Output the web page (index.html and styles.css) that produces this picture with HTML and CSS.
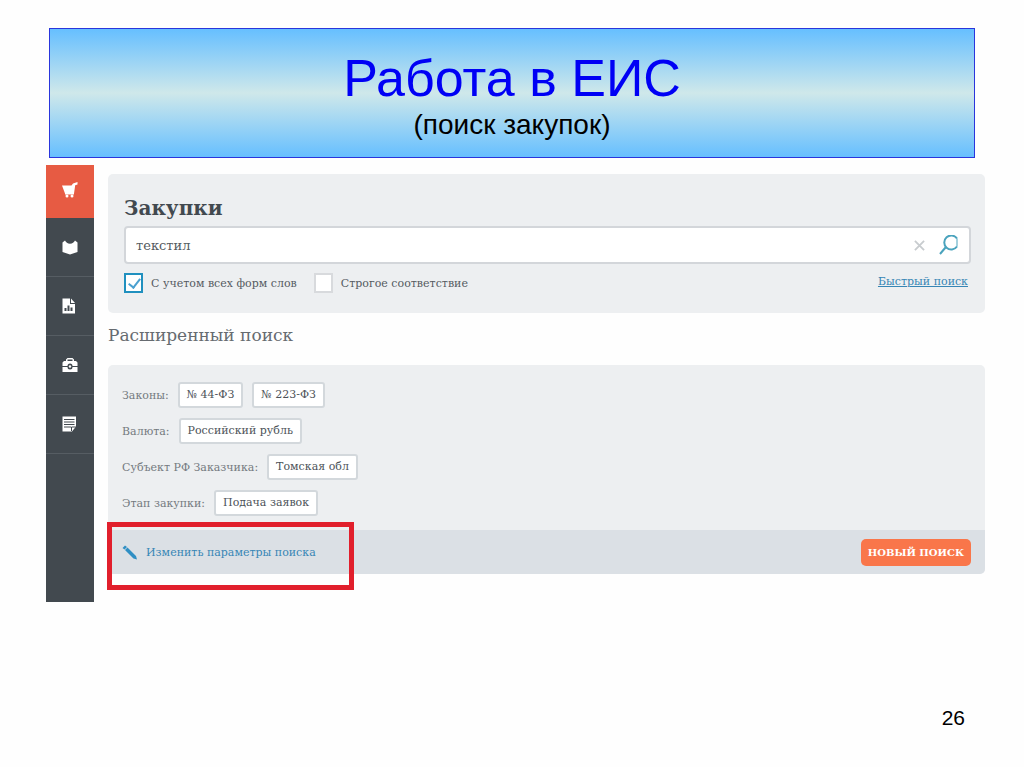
FILE: index.html
```html
<!DOCTYPE html>
<html lang="ru">
<head>
<meta charset="utf-8">
<meta name="viewport" content="width=device-width, initial-scale=1">
<title>Работа в ЕИС</title>
<link rel="stylesheet" href="styles.css">
</head>
<body>
<div class="slide">
  <header class="banner">
    <h1 class="banner-title">Работа в ЕИС</h1>
    <p class="banner-subtitle">(поиск закупок)</p>
  </header>

  <div class="app">
    <nav class="sidebar" aria-label="Разделы">
      <a class="nav-item nav-item-active" href="#purchases" aria-label="Закупки">
        <svg class="nav-icon" viewBox="0 0 16 16"><path d="M0 3.500h9.500L11 1.500 15.500 0v2.500l-2.300.8-1.200 8.200H3Z"/><path d="M3 11h9v1.500H3z"/><circle cx="5" cy="14" r="1.500"/><circle cx="10" cy="14" r="1.500"/></svg>
      </a>
      <a class="nav-item" href="#registry" aria-label="Реестры">
        <svg class="nav-icon" viewBox="0 0 16 16"><path d="M.5 3.500 3 1.500c1 2 2.500 3 5 3.300 2.500-.3 4-1.300 5-3.300l2.500 2V13L8 15.500.5 13Z"/></svg>
      </a>
      <a class="nav-item" href="#reports" aria-label="Отчеты">
        <svg class="nav-icon" viewBox="0 0 16 16"><path fill-rule="evenodd" d="M.5.5h7.500V6H13v9.500H.5Zm2 9.500V13h2v-3Zm3-2.500V13h2V7.500Zm3 2v3.500h2V9.500Z"/><path d="M9 .5 13 5H9Z"/></svg>
      </a>
      <a class="nav-item" href="#tools" aria-label="Инструменты">
        <svg class="nav-icon" viewBox="0 0 16 16"><path fill-rule="evenodd" d="M4 4V2.500L5.500 1h5L12 2.500V4h2l1.500 1.500V9h-5a2.500 2.500 0 0 0-5 0h-5V5.500L2 4Zm1.500 0h5V2.500h-5Z"/><path d="M.5 10h5a2.500 2.500 0 0 0 5 0h5v5H.5Z"/><circle cx="8" cy="9.500" r="1.200"/></svg>
      </a>
      <a class="nav-item" href="#documents" aria-label="Документы">
        <svg class="nav-icon" viewBox="0 0 16 16"><path d="M.5.5h13.500v10L10 15.500H.5Z"/><path class="nav-icon-lines" d="M2 3.500h10.500M2 6h10.500M2 8.500h10.500M2 11h7M9.500 15v-4H14"/></svg>
      </a>
    </nav>

    <main class="content">
      <form class="search-panel">
        <h2 class="search-title"><label for="query">Закупки</label></h2>
        <div class="search-box">
          <input class="search-input" id="query" type="text" value="текстил">
          <button class="icon-button" type="reset" aria-label="Очистить">
            <svg class="clear-icon" viewBox="0 0 12 12"><path d="m1 1 10 10M11 1 1 11"/></svg>
          </button>
          <button class="icon-button" type="submit" aria-label="Найти">
            <svg class="find-icon" viewBox="0 0 20 20"><path d="M18 3.500A7 7 0 1 0 18 11.500M6.500 12.500 1 19"/><path class="find-icon-edge" d="M18 3.500v8"/></svg>
          </button>
        </div>
        <div class="search-options">
          <label class="option"><input class="option-check" type="checkbox" checked>С учетом всех форм слов</label>
          <label class="option"><input class="option-check" type="checkbox">Строгое соответствие</label>
          <a class="quick-link" href="#quick">Быстрый поиск</a>
        </div>
      </form>

      <h2 class="section-title">Расширенный поиск</h2>

      <section class="filters">
        <div class="filter-list">
          <div class="filter-row"><span>Законы:</span><span class="chip">№ 44-ФЗ</span><span class="chip">№ 223-ФЗ</span></div>
          <div class="filter-row"><span>Валюта:</span><span class="chip">Российский рубль</span></div>
          <div class="filter-row"><span>Субъект РФ Заказчика:</span><span class="chip">Томская обл</span></div>
          <div class="filter-row"><span>Этап закупки:</span><span class="chip">Подача заявок</span></div>
        </div>
        <div class="filter-footer">
          <a class="edit-link" href="#edit">
            <svg class="edit-icon" viewBox="0 0 16 16"><path d="M.5 3 3 .5l2 1.500-2.500 2.500ZM3 5l2.500-2.500 8.500 8.500 1 3.500L11.500 13.500Z"/></svg>
            Изменить параметры поиска
          </a>
          <button class="new-search" type="button">НОВЫЙ ПОИСК</button>
          <div class="highlight"></div>
        </div>
      </section>
    </main>
  </div>

  <footer class="page-number">26</footer>
</div>
</body>
</html>
```
FILE: styles.css
```css
* {
  box-sizing: border-box;
}

body {
  margin: 0;
  background: #fefefe;
  color: #000;
  font-family: "Liberation Sans", Arial, sans-serif;
}

.slide {
  display: flex;
  flex-direction: column;
  min-height: 100vh;
  padding: 28px 39px 36px 46px;
}

.banner {
  margin: 0 10px 0 3px;
  padding: 19px 0 15px;
  border: 1px solid #2a35dc;
  background: linear-gradient(#66bfff, #cfe8ea 50%, #66bfff);
  text-align: center;
}

.banner-title {
  margin: 0;
  color: #0000f5;
  font-size: 52px;
  line-height: 60px;
  font-weight: 400;
}

.banner-subtitle {
  margin: 0;
  font-size: 28px;
  line-height: 34px;
}

.app {
  display: flex;
  gap: 14px;
  margin-top: 7px;
  color: #555b61;
  font-family: "DejaVu Serif", serif;
  font-size: 11px;
}

.sidebar {
  flex: 0 0 48px;
  min-height: 437px;
  background: #42494f;
}

.nav-item {
  display: flex;
  align-items: center;
  justify-content: center;
  height: 59px;
  border-bottom: 1px solid #565d63;
}

.nav-item-active {
  height: 53px;
  padding-bottom: 4px;
  border-bottom: 0;
  background: #e75b43;
}

.nav-icon {
  width: 16px;
  height: 16px;
  fill: #fff;
}

.nav-icon-lines {
  fill: none;
  stroke: #42494f;
}

.content {
  flex: 1;
  min-width: 0;
  padding-top: 9px;
}

.search-panel {
  padding: 19px 14px 20px 16px;
  border-radius: 5px;
  background: #edeff1;
}

.search-title {
  margin: 0;
  color: #42494f;
  font-size: 20px;
  line-height: 30px;
}

.search-box {
  display: flex;
  align-items: center;
  gap: 14px;
  margin-top: 3px;
  height: 38px;
  padding: 0 10px;
  border: 2px solid #d3d6da;
  border-radius: 4px;
  background: #fff;
}

.search-input {
  flex: 1;
  min-width: 0;
  padding: 0;
  border: 0;
  outline: 0;
  background: none;
  color: #555b61;
  font-family: inherit;
  font-size: 13px;
}

.icon-button {
  display: flex;
  padding: 0;
  border: 0;
  background: none;
}

.clear-icon {
  width: 11px;
  height: 11px;
  fill: none;
  stroke: #c8cccf;
  stroke-width: 2;
}

.find-icon {
  width: 20px;
  height: 20px;
  fill: none;
  stroke: #4aa3bd;
  stroke-width: 2;
}

.find-icon-edge {
  stroke-width: 1;
}

.search-options {
  display: flex;
  align-items: center;
  gap: 17px;
  margin-top: 9px;
}

.option {
  display: flex;
  align-items: center;
  gap: 8px;
}

.option-check {
  appearance: none;
  width: 19px;
  height: 20px;
  margin: 0;
  border: 2px solid #d8dadd;
  background: #fff;
}

.option-check:checked {
  border-color: #2090bf;
  background: #fff;
}

.option-check:checked::after {
  content: "";
  display: block;
  width: 5px;
  height: 10px;
  margin: 1px 0 0 5px;
  border: solid #4aa0d0;
  border-width: 0 2px 2px 0;
  transform: rotate(38deg);
}

.quick-link {
  margin: 0 3px 4px auto;
  color: #3786b5;
}

.section-title {
  margin: 10px 0 18px;
  color: #666b70;
  font-size: 17px;
  line-height: 24px;
  font-weight: 400;
}

.filters {
  border-radius: 5px;
  background: #edeff1;
}

.filter-list {
  display: flex;
  flex-direction: column;
  gap: 10px;
  padding: 17px 14px 14px;
}

.filter-row {
  display: flex;
  align-items: center;
  gap: 9px;
  color: #747a80;
}

.chip {
  padding: 0 7px;
  border: 2px solid #d3d8dc;
  border-radius: 3px;
  background: #fff;
  color: #4c5258;
  line-height: 22px;
}

.filter-footer {
  position: relative;
  display: flex;
  align-items: center;
  justify-content: space-between;
  padding: 9px 14px 8px;
  border-radius: 0 0 5px 5px;
  background: #dbe0e5;
}

.edit-link {
  display: flex;
  align-items: center;
  gap: 8px;
  color: #3786b5;
  text-decoration: none;
}

.edit-icon {
  width: 16px;
  height: 16px;
  fill: #2f8fc4;
}

.new-search {
  height: 27px;
  padding: 0 7px;
  border: 0;
  border-radius: 5px;
  background: #f9764a;
  color: #fff;
  font-family: inherit;
  font-size: 10px;
  font-weight: 700;
}

.highlight {
  position: absolute;
  top: -8px;
  left: -1px;
  width: 247px;
  height: 68px;
  border: 5px solid #e11f2c;
  pointer-events: none;
}

.page-number {
  margin-top: auto;
  padding-right: 20px;
  font-size: 21px;
  line-height: 26px;
  text-align: right;
}
```
